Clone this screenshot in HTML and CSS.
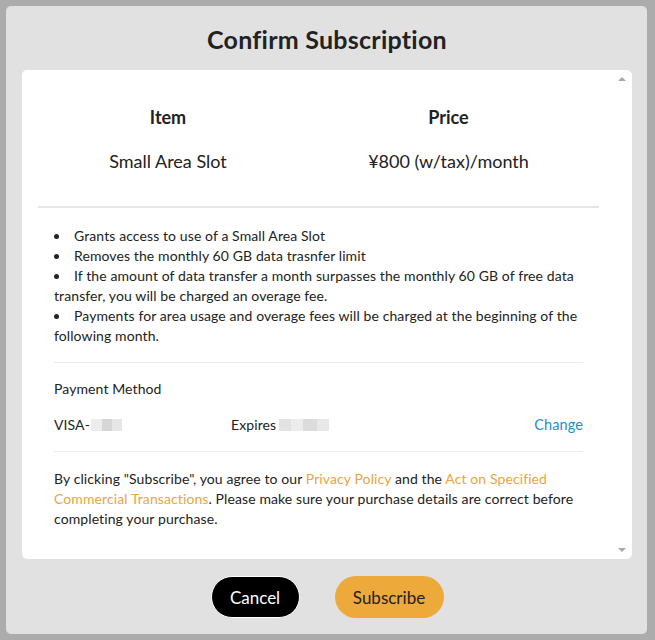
FILE: index.html
```html
<!DOCTYPE html>
<html>
<head>
<meta charset="utf-8">
<link rel="stylesheet" href="styles.css">
</head>
<body>
<div class="modal">
  <h1 class="title">Confirm Subscription</h1>
  <div class="card">
    <div class="scroll-up"></div>
    <div class="scroll-down"></div>
    <div class="summary">
      <div class="th">Item</div>
      <div class="th">Price</div>
      <div class="td">Small Area Slot</div>
      <div class="td">¥800 (w/tax)/month</div>
    </div>
    <div class="body">
      <ul class="points">
        <li>Grants access to use of a Small Area Slot</li>
        <li>Removes the monthly 60 GB data trasnfer limit</li>
        <li>If the amount of data transfer a month surpasses the monthly 60 GB of free data transfer, you will be charged an overage fee.</li>
        <li>Payments for area usage and overage fees will be charged at the beginning of the following month.</li>
      </ul>
      <div class="payment">
        <div class="pm-label">Payment Method</div>
        <div class="pm-row">
          <div class="card-no">VISA-<span class="blur b1"></span><span class="blur b2"></span><span class="blur b3"></span></div>
          <div class="expires">Expires <span class="blur b4"></span><span class="blur b5"></span><span class="blur b6"></span><span class="blur b7"></span></div>
          <a class="change">Change</a>
        </div>
      </div>
      <p class="terms">By clicking "Subscribe", you agree to our <a class="link">Privacy Policy</a> and the <a class="link">Act on Specified Commercial Transactions</a>. Please make sure your purchase details are correct before completing your purchase.</p>
    </div>
  </div>
  <div class="actions">
    <button class="btn cancel">Cancel</button>
    <button class="btn subscribe">Subscribe</button>
  </div>
</div>
</body>
</html>
```
FILE: styles.css
```css
html, body {
  margin: 0;
  padding: 0;
}
body {
  background: #acacac;
  font-family: "Lato", "Open Sans", sans-serif;
  color: #222;
  width: 655px;
  height: 640px;
  overflow: hidden;
}
.modal {
  margin: 6px 8px 0 6px;
  height: 628px;
  background: #e1e1e1;
  border-radius: 5px;
  display: flex;
  flex-direction: column;
  padding: 0 15px 0 16px;
  box-sizing: border-box;
}
.title {
  margin: 0;
  height: 64px;
  box-sizing: border-box;
  padding-top: 18px;
  text-align: center;
  font-size: 25px;
  line-height: 30px;
  letter-spacing: 0.25px;
  font-weight: 700;
  color: #222;
}
.card {
  position: relative;
  background: #fff;
  border-radius: 5px;
  height: 489px;
  box-sizing: border-box;
  padding: 0 33px 0 16px;
}
.scroll-up, .scroll-down {
  position: absolute;
  right: 6px;
  width: 0;
  height: 0;
  border-left: 4px solid transparent;
  border-right: 4px solid transparent;
}
.scroll-up {
  top: 7px;
  border-bottom: 4px solid #a8a8a8;
}
.scroll-down {
  bottom: 7px;
  border-top: 4px solid #a8a8a8;
}
.summary {
  display: grid;
  grid-template-columns: 260px 1fr;
  row-gap: 20px;
  padding: 35px 0 33px;
  border-bottom: 2px solid #e4e4ea;
  text-align: center;
}
.th {
  font-size: 18px;
  font-weight: 700;
  line-height: 24px;
}
.td {
  font-size: 18px;
  line-height: 24px;
}
.body {
  padding: 0 16px;
  font-size: 14px;
  line-height: 20px;
  letter-spacing: 0.1px;
}
.points {
  margin: 0;
  padding: 18px 0 16px;
  list-style: none;
  border-bottom: 1px solid #ececec;
}
.points li::before {
  content: "";
  display: inline-block;
  width: 5px;
  height: 5px;
  border-radius: 50%;
  background: #222;
  margin: 0 15px 2px 0;
  vertical-align: middle;
}
.payment {
  padding: 16px 0 16px;
  border-bottom: 1px solid #ececec;
}
.pm-label {
  margin-bottom: 16px;
}
.pm-row {
  display: flex;
  align-items: center;
}
.card-no {
  width: 177px;
  display: flex;
  align-items: center;
}
.expires {
  flex: 1;
  display: flex;
  align-items: center;
}
.blur {
  display: inline-block;
  height: 12px;
  background: #e4e4e4;
}
.b1 { width: 11px; background: #ececec; margin-left: 1px; }
.b2 { width: 10px; background: #d6d6d6; }
.b3 { width: 10px; background: #e6e6e6; }
.b4 { width: 12px; background: #e2e2e2; margin-left: 3px; }
.b5 { width: 12px; background: #ececec; }
.b6 { width: 14px; background: #dcdcdc; }
.b7 { width: 12px; background: #e8e8e8; }
.change {
  color: #1e8fcf;
  font-size: 14.5px;
}
.terms {
  margin: 0;
  padding: 17px 0 0;
}
.link {
  color: #eaa540;
}
.actions {
  display: flex;
  justify-content: center;
  gap: 35px;
  padding-top: 17px;
}
.btn {
  font-family: inherit;
  font-size: 17px;
  height: 42px;
  border-radius: 21px;
  padding: 0 10px;
  cursor: pointer;
}
.cancel {
  background: #000;
  color: #fff;
  border: 1px solid #fff;
  width: 89px;
}
.subscribe {
  background: #eda93a;
  color: #222;
  border: none;
  width: 109px;
}
```
